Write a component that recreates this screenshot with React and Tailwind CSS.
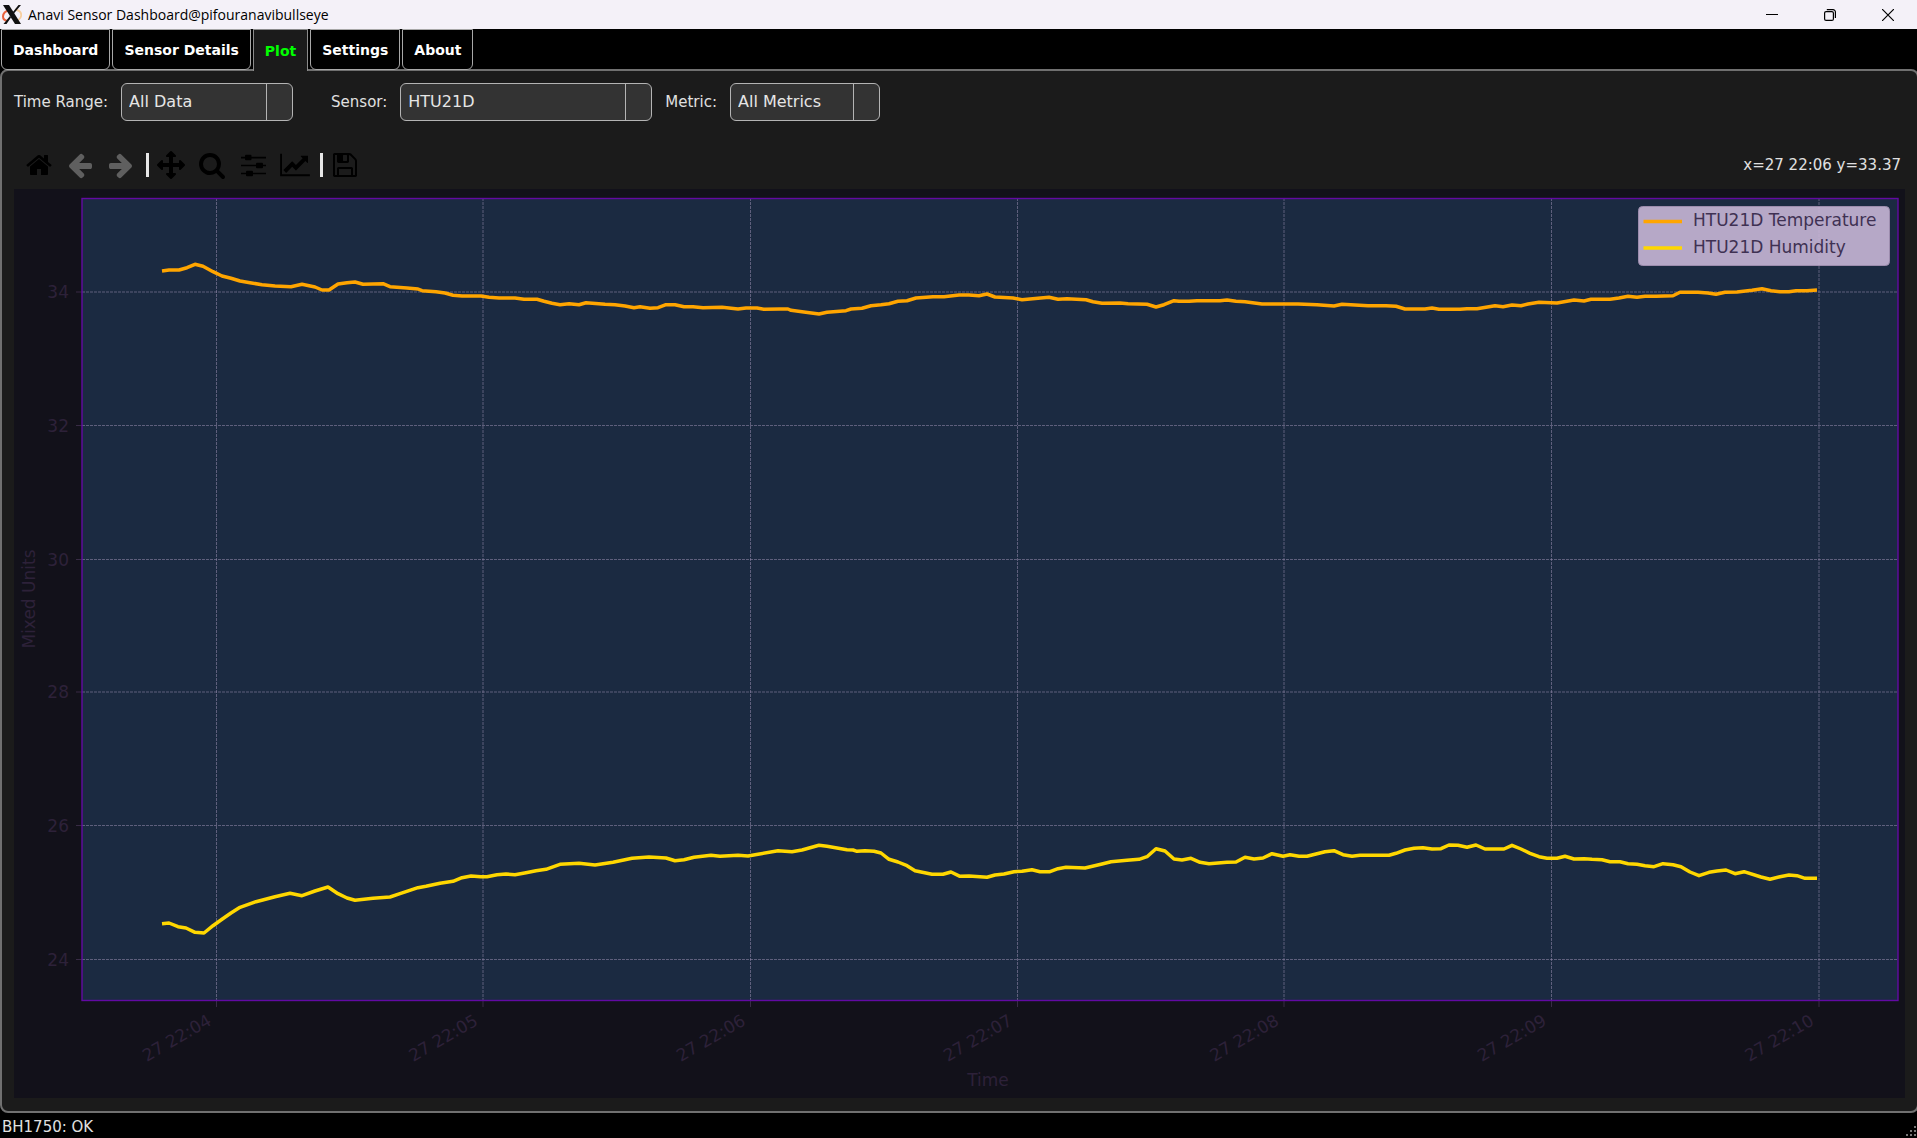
import { useState } from "react";

const TABS = ["Dashboard", "Sensor Details", "Plot", "Settings", "About"];

const X_TICKS = [
  { x: 216.5, label: "27 22:04" },
  { x: 483, label: "27 22:05" },
  { x: 750.5, label: "27 22:06" },
  { x: 1017.5, label: "27 22:07" },
  { x: 1284, label: "27 22:08" },
  { x: 1551.5, label: "27 22:09" },
  { x: 1819, label: "27 22:10" },
];

const Y_TICKS = [
  { y: 292, label: "34" },
  { y: 425.5, label: "32" },
  { y: 559.5, label: "30" },
  { y: 692, label: "28" },
  { y: 825.5, label: "26" },
  { y: 959.5, label: "24" },
];

const TEMPERATURE =
  "162,271 169,270 179,270 187,267.7 195,264.3 203,266.3 213,271.7 222,276 231,278.3 240,281 250,282.7 262,284.7 275,286 291,286.7 302,284.3 315,287 322,290 329,290 338,284 347,282.7 355,282 363,284.3 383,283.7 390,286.7 407,288 418,289 422,290.7 436,291.7 445,293 453,295.3 462,296 481,296 489,297.3 499,298 515,298 524,299.3 537,299.3 544,301.3 552,303.3 560,304.7 569,303.7 579,304.7 586,302.7 605,304.3 615,304.7 625,306 634,307.7 640,306.7 650,308.3 658,307.7 666,304.7 675,304.7 684,306.7 693,306.7 703,307.7 722,307.3 738,309 746,308 757,308 764,309.3 780,309 788,309 791,310.3 802,311.7 819,314 827,312.3 846,310.7 851,309 862,308.3 871,305.7 881,304.7 889,303.7 898,301.3 907,300.7 916,298 933,296.7 944,296.7 959,295 969,295 979,295.7 987,294 995,297 1013,298 1022,299.7 1038,298.3 1049,297.3 1058,299.3 1067,298.7 1086,299.7 1093,301.7 1102,303.3 1120,303 1128,303.7 1147,304.3 1156,307 1164,304.7 1174,300.7 1179,301.3 1189,301.3 1197,300.7 1220,300.7 1227,300 1236,301.3 1245,301.7 1262,304 1298,304 1317,304.7 1334,306 1342,304.3 1368,305.7 1386,305.7 1396,306.3 1405,309 1425,309 1432,308 1439,309.3 1460,309.3 1467,308.7 1477,308.7 1495,305.7 1503,306.7 1512,305 1521,305.7 1528,304 1539,302.3 1557,303 1574,300 1584,301 1591,299.3 1610,299.3 1619,298 1628,296.3 1637,297.3 1645,296.3 1656,296.3 1673,295.7 1680,292.3 1698,292.3 1708,293 1716,294.3 1725,292.3 1737,292 1752,290.3 1762,288.7 1771,290.7 1780,291.7 1789,291.7 1796,290.7 1807,290.7 1817,290";

const HUMIDITY =
  "162,923.7 169,923 178,926.7 186,928 195,932.3 204,933 213,925.7 222,919.3 231,913 240,907.3 256,901.7 275,896.7 290,893.3 302,895.7 315,891 328,887 338,893.7 347,898 355,900.3 373,898.3 390,897 400,893.7 418,887.7 426,886.3 440,883.3 453,881.3 462,877.7 471,876 481,876.7 487,876.7 497,874.7 506,874 515,874.7 526,872.7 536,870.7 546,869.3 560,864.3 579,863.3 595,865 613,862.3 632,858.3 649,857 666,858 675,860.7 684,859.7 694,857.3 711,855.3 720,856.3 738,855.3 748,856 758,854.3 778,850.7 792,851.7 802,850 819,845.3 827,846.3 847,849.7 853,850 857,851.3 865,850.7 874,851.3 881,853 889,859.3 898,862 907,865.7 915,870.7 932,874.3 943,874.3 951,872 960,876.3 969,876 980,876.7 987,877.3 995,875 1004,874 1014,871.7 1022,871.3 1032,869.7 1040,871.7 1050,871.7 1058,868.7 1066,867.3 1085,868 1102,864 1111,861.7 1127,860.3 1139,859.3 1147,856.7 1156,848.7 1165,851 1174,859 1182,860 1191,858.3 1200,862.3 1209,863.7 1227,862.3 1236,862 1245,857.3 1254,859 1263,858 1272,853.7 1283,856.3 1290,854.7 1299,856.3 1307,856.3 1316,854 1325,851.7 1334,850.7 1343,854.7 1352,856.3 1360,855.3 1389,855.3 1396,853.3 1405,850 1414,848.3 1423,847.7 1432,849 1441,848.7 1449,845 1458,845.3 1467,847.3 1476,845 1485,849 1504,849 1512,845.3 1521,849 1530,853.3 1539,856.7 1547,858.3 1557,858.3 1565,856.3 1574,859 1584,858.7 1592,859.3 1602,859.7 1610,861.7 1620,861.7 1628,863.7 1637,864.3 1645,865.7 1654,866.7 1663,863.7 1673,864.7 1681,866.7 1690,872 1699,875.7 1709,872.3 1717,871 1726,870 1735,873.7 1744,871.7 1761,877 1770,879.3 1780,876.7 1789,875 1797,875.7 1805,878.3 1817,878.3";

// Toolbar glyphs, all on a 1792 unit grid
const ICONS = {
  home: "M1472 992v480q0 26-19 45t-45 19h-384v-384h-256v384h-384q-26 0-45-19t-19-45v-480q0-1 .5-3t.5-3l575-474 575 474q1 2 1 6zm223-69l-62 74q-8 9-21 11h-3q-13 0-21-7l-692-577-692 577q-12 8-24 7-13-2-21-11l-62-74q-8-10-7-23.500t11-21.500l719-599q32-26 76-26t76 26l244 204v-195q0-14 9-23t23-9h192q14 0 23 9t9 23v408l219 182q10 8 11 21.500t-7 23.500z",
  arrow: "M1664 896v128q0 53-32.500 90.500t-84.500 37.500h-704l293 294q38 36 38 90t-38 90l-75 76q-37 37-90 37-52 0-91-37l-651-652q-37-37-37-90 0-52 37-91l651-650q38-38 91-38 52 0 90 38l75 74q38 38 38 91t-38 91l-293 293h704q52 0 84.500 37.500t32.500 90.500z",
  pan: "M1792 896q0 26-19 45l-256 256q-19 19-45 19t-45-19-19-45v-128h-384v384h128q26 0 45 19t19 45-19 45l-256 256q-19 19-45 19t-45-19l-256-256q-19-19-19-45t19-45 45-19h128v-384h-384v128q0 26-19 45t-45 19-45-19l-256-256q-19-19-19-45t19-45l256-256q19-19 45-19t45 19 19 45v128h384v-384h-128q-26 0-45-19t-19-45 19-45l256-256q19-19 45-19t45 19l256 256q19 19 19 45t-19 45-45 19h-128v384h384v-128q0-26 19-45t45-19 45 19l256 256q19 19 19 45z",
  zoom: "M1216 832q0-185-131.500-316.500t-316.500-131.500-316.500 131.500-131.500 316.500 131.500 316.500 316.500 131.500 316.500-131.500 131.500-316.500zm512 832q0 52-38 90t-90 38q-54 0-90-38l-343-342q-179 124-399 124-143 0-273.500-55.500t-225-150-150-225-55.500-273.500 55.500-273.500 150-225 225-150 273.500-55.500 273.500 55.500 225 150 150 225 55.500 273.500q0 220-124 399l343 343q37 37 37 90z",
  save: "M512 1536h768v-384h-768v384zm896 0h128v-896q0-14-10-38.500t-20-34.500l-281-281q-10-10-34-20t-39-10v416q0 40-28 68t-68 28h-576q-40 0-68-28t-28-68v-416h-128v1280h128v-416q0-40 28-68t68-28h832q40 0 68 28t28 68v416zm-384-928v-320q0-13-9.500-22.500t-22.500-9.500h-192q-13 0-22.500 9.500t-9.500 22.500v320q0 13 9.500 22.500t22.500 9.500h192q13 0 22.500-9.500t9.500-22.500zm640 32v928q0 40-28 68t-68 28h-1344q-40 0-68-28t-28-68v-1344q0-40 28-68t68-28h928q40 0 88 20t76 48l280 280q28 28 48 76t20 88z",
};

function Icon({ name, className = "" }) {
  return (
    <svg viewBox="0 0 1792 1792" className={`h-7 w-7 fill-current ${className}`}>
      <path d={ICONS[name]} />
    </svg>
  );
}

function SlidersIcon() {
  return (
    <svg viewBox="0 0 25 25" className="h-[25px] w-[25px] fill-current">
      <path d="M0 3.800h25v1.600H0zM0 11.700h25v1.600H0zM0 19.700h25v1.600H0z" />
      <rect x="4" y="1.800" width="6.500" height="5.500" rx="1" />
      <rect x="15" y="9.800" width="7" height="5.500" rx="1" />
      <rect x="5" y="17.800" width="7" height="5.500" rx="1" />
    </svg>
  );
}

function ChartIcon() {
  return (
    <svg viewBox="0 0 2048 1792" className="h-[26px] w-[30px] fill-current">
      <path d="M2048 1536v128h-2048v-1536h128v1408h1920zm-128-1248v435q0 21-19.500 29.500t-35.500-7.500l-121-121-633 633q-10 10-23 10t-23-10l-233-233-416 416-192-192 585-585q10-10 23-10t23 10l233 233 464-464-121-121q-16-16-7.500-35.500t29.500-19.500h435q14 0 23 9t9 23z" />
    </svg>
  );
}

function XLogo() {
  return (
    <svg viewBox="0 0 20 20" className="h-5 w-5" aria-hidden="true">
      <path d="M8 5C3.500 6 1 8.500 1 11.500c0 2.500 1.700 4 4.500 4.500" fill="none" stroke="#e8603c" strokeWidth="2" />
      <path d="M13 4.500c4.500.8 6.500 3 6.200 6-.3 3-2.700 5-7.200 5.300" fill="none" stroke="#f7cfa0" strokeWidth="1.800" />
      <path d="M1 0h6l12 19h-6z" fill="#111" />
      <path d="M16.500 0H19L11.500 9l-1-1.500zM8 11l1 1.500L4.500 19H1.500z" fill="#111" />
    </svg>
  );
}

function TitleBar() {
  return (
    <header className="flex h-[29px] items-center bg-[#f4f1f8] text-black">
      <div className="flex flex-1 items-center gap-1.5 pl-0.5">
        <XLogo />
        <h1 className="font-['Open_Sans',sans-serif] text-sm">
          Anavi Sensor Dashboard@pifouranavibullseye
        </h1>
      </div>

      <button aria-label="Minimize" className="flex h-full w-[58px] items-center justify-center">
        <svg viewBox="0 0 12 12" className="h-3 w-3" fill="none" stroke="currentColor">
          <path d="M0 5.500h12" />
        </svg>
      </button>
      <button aria-label="Restore" className="flex h-full w-[58px] items-center justify-center">
        <svg viewBox="0 0 12 12" className="h-3 w-3" fill="none" stroke="currentColor" strokeWidth="1.200">
          <rect x="0.600" y="2.600" width="8.800" height="8.800" rx="1.500" />
          <path d="M2.800.6H9a2.400 2.400 0 0 1 2.400 2.400v6" />
        </svg>
      </button>
      <button aria-label="Close" className="flex h-full w-[58px] items-center justify-center">
        <svg viewBox="0 0 12 12" className="h-3 w-3" fill="none" stroke="currentColor" strokeWidth="1.200">
          <path d="M0 0l12 12M12 0L0 12" />
        </svg>
      </button>
    </header>
  );
}

function Combo({ id, label, options, className }) {
  return (
    <>
      <label htmlFor={id} className="text-[15px]">
        {label}
      </label>
      <div className={`relative h-[38px] ${className}`}>
        <select
          id={id}
          className="h-full w-full appearance-none rounded-md border border-[#b4b4b4] bg-[#333] pr-7 pl-[7px] text-base text-[#e6e6e6]"
        >
          {options.map((option) => (
            <option key={option}>{option}</option>
          ))}
        </select>
        <span className="pointer-events-none absolute inset-y-0 right-[26px] w-px bg-[#b4b4b4]" />
      </div>
    </>
  );
}

function Plot() {
  return (
    <svg
      viewBox="14 189 1891 909"
      className="block w-full bg-[#12111a] font-['DejaVu_Sans',sans-serif] text-[17px]"
      role="img"
      aria-label="HTU21D Temperature and Humidity"
    >
      <rect x="82" y="198" width="1816" height="803" fill="#1b2a41" />

      {/* Grid and ticks */}
      {X_TICKS.map((tick) => (
        <g key={tick.label}>
          <path d={`M${tick.x} 1001V198`} stroke="#a193b8" strokeOpacity="0.500" strokeDasharray="3 1" />
          <path d={`M${tick.x} 1001v6`} stroke="#382b45" />
          <text
            textAnchor="end"
            fill="#2d2139"
            transform={`translate(${tick.x - 4} 1024) rotate(-30)`}
          >
            {tick.label}
          </text>
        </g>
      ))}
      {Y_TICKS.map((tick) => (
        <g key={tick.label}>
          <path d={`M82 ${tick.y}H1898`} stroke="#a193b8" strokeOpacity="0.500" strokeDasharray="3 1" />
          <path d={`M76 ${tick.y}h6`} stroke="#382b45" />
          <text x="69" y={tick.y + 6} textAnchor="end" fill="#2d2139">
            {tick.label}
          </text>
        </g>
      ))}

      {/* Series */}
      <g fill="none" strokeWidth="3.500" strokeLinejoin="round">
        <polyline points={TEMPERATURE} stroke="#ffa500" />
        <polyline points={HUMIDITY} stroke="#ffd700" />
      </g>

      <rect x="82" y="198.500" width="1816" height="802" fill="none" stroke="#620aa3" strokeWidth="1.400" />

      {/* Axis titles */}
      <text x="988" y="1086" textAnchor="middle" fill="#2d2139">
        Time
      </text>
      <text textAnchor="middle" fill="#2d2139" transform="translate(35 599) rotate(-90)">
        Mixed Units
      </text>

      {/* Legend */}
      <rect x="1638.500" y="206.500" width="251" height="59" rx="4" fill="#c8b6d6" fillOpacity="0.900" stroke="#9c8cad" />
      <path d="M1643.500 221.500h38.500" stroke="#ffa500" strokeWidth="3.500" />
      <path d="M1643.500 248h38.500" stroke="#ffd700" strokeWidth="3.500" />
      <text x="1693" y="226" fill="#3f3153">
        HTU21D Temperature
      </text>
      <text x="1693" y="253" fill="#3f3153">
        HTU21D Humidity
      </text>
    </svg>
  );
}

function App() {
  const [activeTab, setActiveTab] = useState("Plot");

  return (
    <div className="flex min-h-screen flex-col overflow-hidden bg-black font-['DejaVu_Sans',sans-serif] text-[#e0e0e0]">
      <TitleBar />

      {/* Tabs */}
      <nav className="relative z-10 -mb-px flex gap-0.5 pl-px" role="tablist">
        {TABS.map((tab) => (
          <button
            key={tab}
            role="tab"
            aria-selected={tab === activeTab}
            onClick={() => setActiveTab(tab)}
            className={
              tab === activeTab
                ? "h-[42px] border border-b-0 border-[#8c8c8c] bg-[#1b1b1b] px-[11px] text-sm font-bold text-[#00ff00]"
                : "h-[41px] rounded-b-md border border-[#a8a8a8] bg-black px-[11px] text-sm font-bold text-white"
            }
          >
            {tab}
          </button>
        ))}
      </nav>

      {/* The panel's right border runs off the window */}
      <main className="-mt-px -mr-0.5 flex-1 rounded-lg border-2 border-[#707070] bg-[#1b1b1b] p-3">
        {/* Filters */}
        <div className="flex items-center">
          <Combo id="range" label="Time Range:" options={["All Data"]} className="mr-[38px] ml-[13px] w-[172px]" />
          <Combo id="sensor" label="Sensor:" options={["HTU21D"]} className="mr-[13px] ml-[13px] w-[252px]" />
          <Combo id="metric" label="Metric:" options={["All Metrics"]} className="ml-[13px] w-[150px]" />
        </div>

        {/* Plot toolbar */}
        <div className="mt-6 mb-1 flex h-10 items-center text-black">
          <button aria-label="Home" className="flex w-[41px] justify-center pl-2">
            <Icon name="home" />
          </button>
          <button aria-label="Back" className="flex w-[41px] justify-center pl-2 text-[#5f5f5f]">
            <Icon name="arrow" />
          </button>
          <button aria-label="Forward" className="flex w-[41px] justify-center pl-2 text-[#5f5f5f]">
            <Icon name="arrow" className="-scale-x-100" />
          </button>
          <span className="mr-2 ml-[9px] h-6 w-[3px] bg-[#e8e8e8]" />
          <button aria-label="Pan" className="flex w-[41px]">
            <Icon name="pan" />
          </button>
          <button aria-label="Zoom" className="flex w-[41px]">
            <Icon name="zoom" />
          </button>
          <button aria-label="Configure subplots" className="flex w-[41px] pl-0.5">
            <SlidersIcon />
          </button>
          <button aria-label="Edit axis" className="flex w-8">
            <ChartIcon />
          </button>
          <span className="mx-2 h-6 w-[3px] bg-[#e8e8e8]" />
          <button aria-label="Save" className="flex">
            <Icon name="save" />
          </button>
          <output className="ml-auto pr-1 text-[15px] text-[#e0e0e0]">x=27 22:06 y=33.37</output>
        </div>

        <Plot />
      </main>

      {/* Status bar */}
      <footer className="flex h-[25px] items-end justify-between pl-0.5 text-[15px]">
        <span>BH1750: OK</span>
        <svg viewBox="0 0 12 12" className="h-3 w-3 fill-[#777]" aria-hidden="true">
          <path d="M9 0h2v2H9zM9 4h2v2H9zM5 4h2v2H5zM9 8h2v2H9zM5 8h2v2H5zM1 8h2v2H1z" />
        </svg>
      </footer>
    </div>
  );
}

export default App;
